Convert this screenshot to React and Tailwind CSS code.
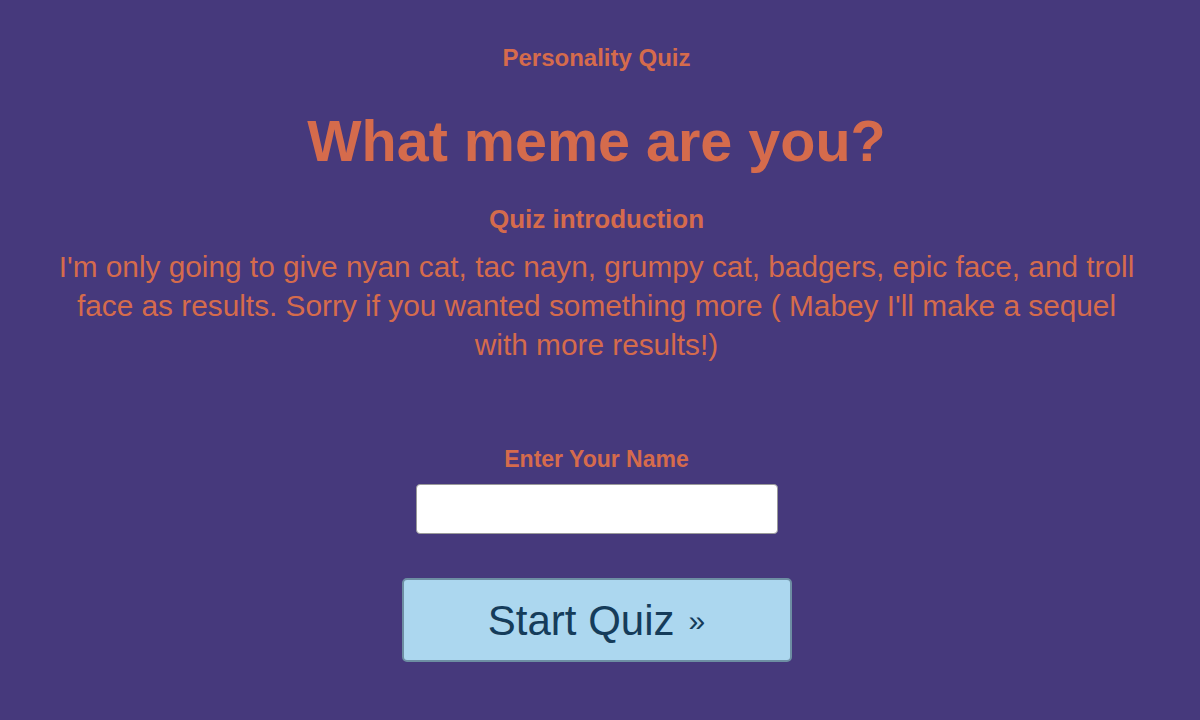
import { useState } from 'react';

export default function App() {
  const [name, setName] = useState('');

  return (
    <div className="min-h-[720px] w-full bg-[#46397c] text-[#d56b4c] font-['Liberation_Sans',Arial,sans-serif] text-center pt-[44px] pr-[7px]">
      <div className="text-[24px] leading-[28px] font-bold">Personality Quiz</div>

      <h1 className="mt-[37px] text-[57.5px] leading-[64px] font-bold">What meme are you?</h1>

      <h2 className="mt-[31px] text-[26px] leading-[30px] font-bold">Quiz introduction</h2>
      <p className="mt-[13px] mx-auto max-w-[1088px] text-[29.8px] leading-[39px]">
        I'm only going to give nyan cat, tac nayn, grumpy cat, badgers, epic face, and troll face as results. Sorry if you wanted something more ( Mabey I'll make a sequel with more results!)
      </p>

      {/* Name entry */}
      <div className="mt-[81px] flex flex-col items-center">
        <label htmlFor="name" className="text-[23px] leading-[28px] font-bold">Enter Your Name</label>
        <input
          id="name"
          type="text"
          value={name}
          onChange={(e) => setName(e.target.value)}
          className="mt-[11px] w-[362px] h-[50px] bg-white border border-[#9a9a9a] rounded-[4px] px-3 text-[20px] text-black outline-none"
        />
        <button
          type="button"
          className="mt-[44px] w-[390px] h-[84px] flex items-center justify-center bg-[#acd7ef] border-2 border-[#6d8ea3] rounded-[5px] text-[42px] text-[#153c5a]"
        >
          Start Quiz<span className="ml-[14px] text-[30px]">»</span>
        </button>
      </div>
    </div>
  );
}
